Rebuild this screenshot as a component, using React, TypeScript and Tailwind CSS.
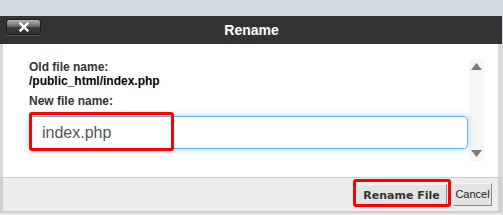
import React from "react";

const sans = "font-['Liberation_Sans',Arial,sans-serif]";

function CloseButton() {
  return (
    <button className="ml-[5px] mt-[3px] flex h-[16px] w-[35px] items-center justify-center rounded-[3px] border border-[#1e1e1e] bg-[linear-gradient(#b4b4b4,#6a6a6a_45%,#3c3c3c_55%,#2e2e2e)] shadow-[0_1px_1px_rgba(90,110,130,0.6)]">
      <svg width="10" height="10" viewBox="0 0 10 10">
        <path d="M1.5 1.5 L8.5 8.5 M8.5 1.5 L1.5 8.5" stroke="#fff" strokeWidth="2.4" strokeLinecap="square" />
      </svg>
    </button>
  );
}

function FakeScrollbar() {
  return (
    <div className="flex w-[15px] flex-col items-center justify-between bg-[#f7f7f7] py-[4px]">
      <svg width="11" height="7" viewBox="0 0 11 7">
        <path d="M0 7 L5.5 0 L11 7 Z" fill="#7a7a7a" />
      </svg>
      <svg width="11" height="7" viewBox="0 0 11 7">
        <path d="M0 0 L11 0 L5.5 7 Z" fill="#7a7a7a" />
      </svg>
    </div>
  );
}

export default function App() {
  return (
    <div className={`h-[215px] w-[503px] bg-[#d3dde3] pt-[16px] ${sans}`}>
      <div className="flex h-[199px] w-[502px] flex-col bg-[#e6e6e6]">
        <div className="grid h-[28px] grid-cols-[1fr_auto_1fr] items-start bg-[#333] pl-[1px]">
          <CloseButton />
          <div className="self-center text-[14px] font-bold leading-none text-white">Rename</div>
          <div />
        </div>

        <div className="flex h-[133px] border-l-[3px] border-r-[4px] border-[#d9d9d9] bg-white pl-[26px] pr-[14px] pt-[15px] pb-[16px]">
          <div className="flex flex-1 flex-col pr-[1px]">
            <div className="pt-[1px] text-[12px] font-bold leading-[14px] text-[#333]">Old file name:</div>
            <div className="text-[12px] font-bold leading-[14px] text-black">/public_html/index.php</div>
            <div className="mt-[6px] text-[12px] font-bold leading-[14px] text-[#333]">New file name:</div>
            <div className="relative mt-[8px]">
              <div className="flex h-[33px] items-center rounded-[4px] border border-[#66afe9] pl-[12px] text-[16px] text-[#555] shadow-[0_0_7px_rgba(102,175,233,0.55)]">
                index.php
              </div>
              <div className="absolute left-0 top-[-4px] h-[39px] w-[145px] rounded-[3px] border-[3px] border-[#ff0000]" />
            </div>
          </div>
          <FakeScrollbar />
        </div>

        <div className="flex h-[34px] items-center justify-end gap-[6px] border-l-[3px] border-r-[4px] border-t border-[#d0d0d0] border-t-[#cccccc] bg-[#ededed] pr-[6px]">
          <div className="relative">
            <button className="h-[23px] w-[91px] border border-[#f4f4f4] border-b-[#8a8a8a] border-r-[#8a8a8a] bg-[#e4e4e4] font-['DejaVu_Sans',Verdana,sans-serif] text-[11px] font-bold text-[#333]">
              Rename File
            </button>
            <div className="absolute left-[-3px] top-[-3px] h-[28px] w-[98px] rounded-[3px] border-[3px] border-[#ff0000]" />
          </div>
          <button className="h-[23px] w-[39px] border border-[#f4f4f4] border-b-[#8a8a8a] border-r-[#8a8a8a] bg-[#e4e4e4] text-[11px] text-[#222]">
            Cancel
          </button>
        </div>
        <div className="h-[2px] bg-[#cfcfcf]" />
      </div>
    </div>
  );
}
